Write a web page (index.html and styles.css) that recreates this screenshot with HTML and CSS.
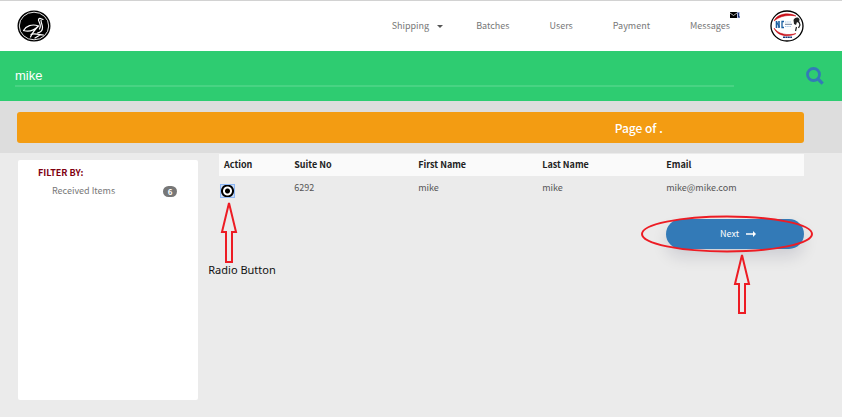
FILE: index.html
```
<!DOCTYPE html>
<html lang="en">
<head>
<meta charset="utf-8">
<title>Search received items</title>
<link rel="stylesheet" href="styles.css">
</head>
<body>
<header class="topbar">
  <a class="brand" href="#" aria-label="Home">
    <svg class="logo" viewBox="0 0 34 32" aria-hidden="true">
      <ellipse cx="17" cy="16" rx="16.5" ry="15.5" fill="#000"/>
      <ellipse cx="17" cy="16" rx="14.7" ry="13.8" fill="none" stroke="#fff" stroke-width=".9"/>
      <g fill="none" stroke="#fff" stroke-width="1.2" stroke-linejoin="round" stroke-linecap="round">
        <path d="M26 9.500l-2.500-1c-2-.3-2.500 1.500-1.500 3 1.500 3 2 5 .5 7.500"/>
        <path d="M24 10c0 3 1.500 5 1.500 7.500 0 3-2 5-5 5.500"/>
        <path d="M6.500 20.500C9 16 15 13.500 21.500 16M6.500 20.500c5 1.500 11-.5 15-4.500-3 3-6 6-8 11"/>
        <path d="M14 24.500c3-2 6 .5 12.500.5M18 28l5-3"/>
      </g>
    </svg>
  </a>
  <nav class="nav">
    <a class="has-menu" href="#">Shipping <span class="caret"></span></a>
    <a href="#">Batches</a>
    <a href="#">Users</a>
    <a href="#">Payment</a>
    <a class="messages" href="#">Messages
      <svg class="envelope" viewBox="0 0 10 6" aria-hidden="true">
        <rect width="7" height="6" fill="#000"/><path d="M0 1l3.500 2.500L7 1" fill="none" stroke="#fff" stroke-width=".7"/>
        <rect x="7" width="3" height="6" fill="#b9c4e6"/><path d="M7.500 1h1v4M8 5h2" fill="none" stroke="#1f3678" stroke-width="1"/>
      </svg>
    </a>
    <a href="#" aria-label="Account">
      <svg class="logo" viewBox="0 0 34 32" aria-hidden="true">
        <ellipse cx="17" cy="16" rx="16" ry="15" fill="#fff" stroke="#000" stroke-width="1.300"/>
        <path d="M4 11C7 3.500 19 2 26 6C18 4.500 10 6 4 11Z" fill="#c8101a" stroke="#c8101a" stroke-width=".5"/>
        <path d="M4 18c4 6 13 8 22 5.500-7 4-19 3-22-5.500z" fill="#c8101a" stroke="#c8101a" stroke-width=".5"/>
        <path d="M6.500 11v7M9 11v7" stroke="#1b5fa0" stroke-width="1.600"/>
        <path d="M6.500 12l3 5M14 11.500h-2v6h2" fill="none" stroke="#1b5fa0" stroke-width="1.300"/>
        <path d="M15 12H21M15 16.500H21" stroke="#a9cbe8" stroke-width="1" stroke-dasharray="1.500 .7"/>
        <path d="M15 14.300H22" stroke="#6c7f98" stroke-width="1"/>
        <path d="M23.500 10c1-3 5-3.500 6-1l-.5 4-2-1-1 3-2-1z" fill="#222"/>
        <path d="M29 12l1 3-1.500 3M26.500 17l-1 4" fill="none" stroke="#222" stroke-width="1.200"/>
        <path d="M13 27.300h9" stroke="#173b7a" stroke-width="1.500" stroke-dasharray="2 .4"/>
      </svg>
    </a>
  </nav>
</header>

<form class="search">
  <input class="search-input" type="text" value="mike" aria-label="Search">
  <button class="search-button" type="button" aria-label="Search">
    <svg viewBox="0 0 18 18" aria-hidden="true"><circle cx="7.500" cy="7.500" r="6" fill="none" stroke="#337ab7" stroke-width="2.800"/><path d="M12 12l4.700 4.700" stroke="#337ab7" stroke-width="3.200"/></svg>
  </button>
</form>

<section class="banner"><p class="page-status"><span>Page of .</span></p></section>

<main class="content">
  <aside class="filters">
    <h2>FILTER BY:</h2>
    <a class="filter" href="#">Received Items <span class="badge">6</span></a>
  </aside>
  <section class="results">
    <table>
      <thead><tr><th class="col-action">Action</th><th>Suite No</th><th>First Name</th><th>Last Name</th><th class="col-email">Email</th></tr></thead>
      <tbody><tr>
        <td class="choice">
          <input type="radio" name="customer" checked aria-label="Select suite 6292">
          <div class="radio-note">
            <svg class="arrow" viewBox="0 0 16 62" aria-hidden="true"><path d="M8 2L15 31H11V61H5V31H1Z"/></svg>
            <span>Radio Button</span>
          </div>
        </td>
        <td>6292</td><td>mike</td><td>mike</td><td>mike@mike.com</td>
      </tr></tbody>
    </table>
    <div class="actions">
      <button class="next" type="button">Next
        <svg class="next-icon" viewBox="0 0 10 6" aria-hidden="true"><path d="M0 3h8" stroke="#fff" stroke-width="1.500"/><path d="M7 0l3 3-3 3z" fill="#fff"/></svg>
      </button>
      <svg class="ring" viewBox="0 0 172 38" aria-hidden="true"><ellipse cx="86" cy="19" rx="85" ry="17.500"/></svg>
      <svg class="arrow next-arrow" viewBox="0 0 16 62" aria-hidden="true"><path d="M8 2L15 31H11V60H5V31H1Z"/></svg>
    </div>
  </section>
</main>
</body>
</html>
```
FILE: styles.css
```
* { box-sizing: border-box; }
body {
  margin: 0;
  background: #ebebeb;
  color: #555;
  font: 9px/12px "Noto Sans CJK SC", "Open Sans", sans-serif;
}
a { color: inherit; text-decoration: none; }
button { font: inherit; border: 0; cursor: pointer; }
svg { display: block; }

.topbar {
  display: flex;
  align-items: center;
  justify-content: space-between;
  height: 51px;
  padding: 0 38px 0 17px;
  border-top: 1px solid #d2d2d2;
  background: #fff;
}
.logo { width: 34px; height: 32px; }
.nav { display: flex; align-items: center; gap: 40px; color: #777; }
.has-menu { display: flex; align-items: center; gap: 8px; margin-right: -7px; }
.caret { border: 3px solid transparent; border-top-color: #555; border-bottom: 0; }
.messages { position: relative; }
.envelope { position: absolute; left: 100%; top: -8px; width: 10px; height: 6px; }

.search {
  display: flex;
  align-items: center;
  justify-content: space-between;
  height: 50px;
  padding: 0 18px 0 15px;
  background: #2ecc71;
}
.search-input {
  flex: 1;
  height: 22px;
  margin-right: 72px;
  padding: 1px 0 0;
  border: 0;
  border-bottom: 2px solid #48d383;
  outline: 0;
  background: transparent;
  color: #fff;
  font: 13px "Liberation Sans", sans-serif;
}
.search-button { width: 18px; height: 18px; padding: 0; background: none; }

.banner { padding: 11px 38px 10px 17px; background: #ddd; }
.page-status {
  display: grid;
  grid-template-columns: 58% 1fr;
  align-items: center;
  height: 31px;
  margin: 0;
  border-radius: 3px;
  background: #f39c12;
  color: #fff;
  font-size: 12px;
  font-weight: 500;
  text-align: center;
}
.page-status span { grid-column: 2; }

.content { display: flex; align-items: flex-start; gap: 21px; padding: 1px 38px 17px 18px; }
.filters {
  flex: 0 0 180px;
  min-height: 240px;
  margin-top: 6px;
  padding: 7px 21px 7px 20px;
  border-radius: 2px;
  background: #fff;
}
.filters h2 { margin: 0; color: #800010; font-size: 9px; line-height: 12px; }
.filter { display: flex; justify-content: space-between; align-items: center; margin-top: 6px; padding-left: 14px; color: #777; }
.badge {
  width: 14px;
  height: 11px;
  border-radius: 6px;
  background: #777;
  color: #fff;
  font-size: 8px;
  font-weight: 700;
  line-height: 11px;
  text-align: center;
}

.results { flex: 1; }
table { width: 100%; border-collapse: collapse; table-layout: fixed; }
th { height: 22px; padding: 0 5px; background: #fafafa; color: #222; text-align: left; }
td { height: 24px; padding: 0 5px; }
.col-action { width: 12%; }
.col-email { width: 24.4%; }
.choice { position: relative; padding: 5px 1px 0; }
.choice input {
  display: block;
  appearance: none;
  width: 15px;
  height: 14px;
  margin: 0;
  border: 1px solid #8db7f5;
  background: radial-gradient(circle, #000 0 2px, #fff 3px 4px, #000 5px 6px, #c9dcfa 7px);
}
.radio-note {
  position: absolute;
  top: 25px;
  left: -28px;
  display: flex;
  flex-direction: column;
  align-items: center;
  width: 76px;
  color: #111;
  font: 11px/14px "Noto Sans", sans-serif;
  white-space: nowrap;
}
.arrow, .ring { overflow: visible; fill: none; stroke: #ed1c24; stroke-width: 2; pointer-events: none; }
.arrow { width: 16px; height: 62px; }
.radio-note span { margin-left: 26px; }

.actions { position: relative; width: 138px; margin: 19px 0 0 auto; }
.next {
  display: flex;
  align-items: center;
  justify-content: center;
  gap: 7px;
  width: 100%;
  height: 30px;
  padding: 0 0 0 6px;
  border-radius: 15px;
  background: #337ab7;
  box-shadow: 0 8px 16px rgba(0, 0, 50, .12);
  color: #fff;
}
.next-icon { width: 10px; height: 6px; }
.ring { position: absolute; top: -4px; left: -25px; width: 172px; height: 38px; }
.next-arrow { position: absolute; top: 34px; left: 68px; }
```
